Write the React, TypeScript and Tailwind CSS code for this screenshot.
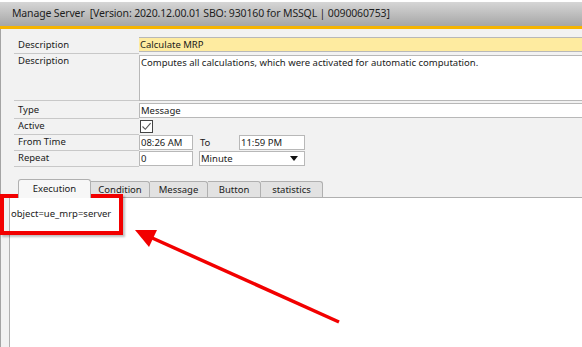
import React from "react";

const font = { fontFamily: '"Noto Sans", "Open Sans", sans-serif' };

const Label: React.FC<{ text: string; tall?: boolean }> = ({ text, tall }) => (
  <div
    className={`w-[125px] shrink-0 border-b border-[#c8c8c8] pl-[4px] leading-[14px] ${
      tall ? "h-[47px]" : "h-[16px]"
    }`}
  >
    {text}
  </div>
);

const App: React.FC = () => {
  return (
    <div
      className="relative w-[582px] h-[347px] overflow-hidden bg-white pt-[2px] text-[9.5px] text-[#1a1a1a] flex flex-col"
      style={font}
    >
      {/* title bar */}
      <div className="h-[24px] shrink-0 bg-gradient-to-b from-[#d6d6d6] to-[#a6a6a6] pl-[12px] flex items-center text-[10.5px] tracking-[-0.15px] text-[#1e1e1e] whitespace-nowrap">
        Manage Server&nbsp;&nbsp;[Version: 2020.12.00.01 SBO: 930160 for MSSQL | 0090060753]
      </div>
      <div className="h-[3px] shrink-0 bg-[#f6b400]" />

      <div className="flex-1 flex flex-col bg-[#f2f2f2] border-l border-[#a4a4a4]">
        {/* form */}
        <div className="pl-[13px] pt-[9px] flex flex-col">
          <div className="flex">
            <Label text="Description" />
            <div className="flex-1 h-[15px] -mt-[1px] bg-[#feeba0] border-y border-[#b8b8b8] pl-[1px] leading-[13px]">
              Calculate MRP
            </div>
          </div>
          <div className="flex">
            <Label text="Description" tall />
            <div className="flex-1 h-[46px] mt-[1px] bg-white border border-r-0 border-[#b8b8b8] pl-[1px] leading-[14px]">
              Computes all calculations, which were activated for automatic computation.
            </div>
          </div>
          <div className="flex mt-[2px]">
            <Label text="Type" />
            <div className="flex-1 h-[15px] bg-white border border-r-0 border-[#b8b8b8] pl-[1px] leading-[13px]">
              Message
            </div>
          </div>
          <div className="flex">
            <Label text="Active" />
            <div className="pl-[1px] pt-[1px]">
              <div className="w-[13px] h-[13px] border border-[#444] bg-white flex items-center justify-center">
                <svg width="11" height="11" viewBox="0 0 11 11">
                  <path d="M1.5 5.5 L4.3 8.3 L9.6 2.2" fill="none" stroke="#555" strokeWidth="1.1" />
                </svg>
              </div>
            </div>
          </div>
          <div className="flex">
            <Label text="From Time" />
            <div className="w-[54px] h-[15px] bg-white border border-[#b8b8b8] pl-[1px] leading-[13px]">
              08:26 AM
            </div>
            <div className="w-[46px] pl-[7px] leading-[16px]">To</div>
            <div className="w-[66px] h-[15px] bg-white border border-[#b8b8b8] pl-[1px] leading-[13px]">
              11:59 PM
            </div>
          </div>
          <div className="flex">
            <Label text="Repeat" />
            <div className="w-[54px] h-[15px] bg-white border border-[#b8b8b8] pl-[1px] leading-[13px]">
              0
            </div>
            <div className="ml-[6px] w-[106px] h-[15px] bg-white border border-[#b8b8b8] pl-[1px] leading-[13px] flex items-center justify-between pr-[6px]">
              <span>Minute</span>
              <svg width="8" height="5" viewBox="0 0 8 5">
                <path d="M0 0 H8 L4 5 Z" fill="#111" />
              </svg>
            </div>
          </div>
        </div>

        {/* tabs */}
        <div className="mt-[11px] pl-[8px] flex flex-col flex-1">
          <div className="flex items-end h-[19px] pl-[9px]">
            <div className="w-[73px] h-[19px] bg-[#f7f7f7] border border-b-0 border-[#b0b0b0] rounded-t-[3px] text-center leading-[18px] -mb-[1px] relative z-10">
              Execution
            </div>
            {[
              ["Condition", 59],
              ["Message", 58],
              ["Button", 53],
              ["statistics", 62],
            ].map(([t, w]) => (
              <div
                key={t as string}
                style={{ width: w as number }}
                className="h-[16px] bg-[#e2e2e2] border border-l-0 border-b-0 border-[#b0b0b0] rounded-tr-[3px] text-center leading-[15px]"
              >
                {t}
              </div>
            ))}
          </div>
          <div className="flex-1 bg-white border-l border-t border-[#b0b0b0] pl-[1px] pt-[9px]">
            object=ue_mrp=server
          </div>
        </div>
      </div>

      {/* highlight box */}
      <div className="absolute left-0 top-[194px] w-[123px] h-[41px] border-[4px] border-[#f20000] shadow-[2px_2px_2px_rgba(0,0,0,0.25)]" />

      {/* arrow */}
      <svg className="absolute left-0 top-0" width="582" height="347" viewBox="0 0 582 347">
        <line x1="339" y1="322" x2="150" y2="237" stroke="#f20000" strokeWidth="3.5" />
        <path d="M135 230 L157 230 L149 247 Z" fill="#f20000" />
      </svg>
    </div>
  );
};

export default App;
